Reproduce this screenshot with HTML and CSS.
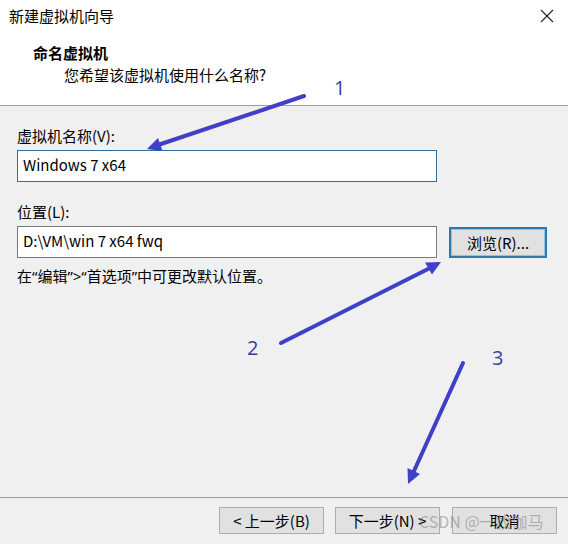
FILE: index.html
```html
<!DOCTYPE HTML>
<html>
    <head>
        <meta charset="UTF-8">
        <title>新建虚拟机向导</title>
        <link rel="stylesheet" href="styles.css">
    </head>
    <body>
        <div id="wizard">
            <div class="header">
                <div class="titlebar">
                    <span class="title">新建虚拟机向导</span>
                    <svg class="close" width="14" height="14" viewBox="0 0 14 14">
                        <path d="M1 1L13 13M13 1L1 13" stroke="#222" stroke-width="1.1" fill="none"/>
                    </svg>
                </div>
                <h1 class="heading">命名虚拟机</h1>
                <p class="sub">您希望该虚拟机使用什么名称?</p>
            </div>
            <div class="content">
                <p class="label">虚拟机名称(V):</p>
                <input class="textbox focused" type="text" value="Windows 7 x64">
                <p class="label second">位置(L):</p>
                <div class="path-row">
                    <input class="textbox" type="text" value="D:\VM\win 7 x64 fwq">
                    <button class="btn browse">浏览(R)...</button>
                </div>
                <p class="hint">在“编辑”>“首选项”中可更改默认位置。</p>
            </div>
            <div class="footer">
                <button class="btn">&lt; 上一步(B)</button>
                <button class="btn">下一步(N) &gt;</button>
                <button class="btn">取消</button>
            </div>
            <!-- 标注：箭头和序号 -->
            <svg class="marks" width="568" height="544" viewBox="0 0 568 544">
                <g stroke="#3f3fc8" stroke-width="4" stroke-linecap="round" fill="none">
                    <line x1="304" y1="96" x2="158" y2="145"/>
                    <line x1="281" y1="343" x2="430" y2="268"/>
                    <line x1="463" y1="363" x2="414" y2="471"/>
                </g>
                <g fill="#3f3fc8">
                    <polygon points="147,149 162.5,151 158,138"/>
                    <polygon points="441,262 432,274.5 425,262.5"/>
                    <polygon points="408,484 420,474 407.5,468"/>
                </g>
                <g class="num" fill="#3b3b9e">
                    <text x="334" y="95">1</text>
                    <text x="247" y="355">2</text>
                    <text x="492" y="365">3</text>
                </g>
            </svg>
            <span class="watermark">CSDN @一枚伽马</span>
        </div>
    </body>
</html>
```

FILE: styles.css
```css
body{margin:0;font-family:"Noto Sans CJK SC","Noto Sans",sans-serif;font-size:15px;color:#000;}
p,h1{margin:0;}
button{margin:0;padding:0;font-family:inherit;}
#wizard{
    position:relative;
    display:flex;
    flex-direction:column;
    width:568px;
    height:544px;
    background-color:#f0f0f0;
    overflow:hidden;
}
/* 顶部白色区域 */
#wizard .header{
    box-sizing:border-box;
    height:106px;
    background-color:#fff;
    border-bottom:1px solid #a0a0a0;
}
#wizard .titlebar{
    display:flex;
    align-items:center;
    justify-content:space-between;
    height:31px;
    padding:0 14px 0 9px;
    line-height:20px;
}
#wizard .close{
    display:block;
    margin-top:1px;
}
#wizard .heading{
    margin-top:12px;
    padding-left:33px;
    font-size:15px;
    font-weight:bold;
    line-height:20px;
}
#wizard .sub{
    margin-top:2px;
    padding-left:64px;
    line-height:20px;
}
/* 中间表单区域 */
#wizard .content{
    flex:1;
    padding:20px 0 0 17px;
}
#wizard .label{
    margin-bottom:4px;
    line-height:20px;
}
#wizard .label.second{
    margin-top:20px;
}
#wizard .textbox{
    display:block;
    box-sizing:border-box;
    width:420px;
    height:32px;
    margin:0;
    padding:0 5px 4px;
    border:1px solid #7a7a7a;
    font-family:inherit;
    font-size:15px;
    color:#000;
    background-color:#fff;
    outline:none;
}
#wizard .textbox.focused{
    border-color:#2f6f9f;
}
#wizard .path-row{
    display:flex;
    align-items:center;
    gap:12px;
}
#wizard .hint{
    margin-top:8px;
    line-height:20px;
    font-family:"Noto Sans","Noto Sans CJK SC",sans-serif; /*引号用窄字形*/
}
#wizard .btn{
    box-sizing:border-box;
    width:105px;
    height:27px;
    border:1px solid #adadad;
    font-size:15px;
    line-height:25px;
    color:#000;
    background-color:#e1e1e1;
}
#wizard .browse{
    width:98px;
    height:31px;
    border:2px solid #2a7ab0;
    box-shadow:inset 0 0 0 1px #8ec3e6;
}
/* 底部按钮 */
#wizard .footer{
    display:flex;
    justify-content:flex-end;
    gap:11px;
    height:47px;
    box-sizing:border-box;
    padding:9px 11px 0 0;
    border-top:1px solid #a0a0a0;
}
#wizard .footer .btn:nth-child(3){
    margin-left:1px;
}
#wizard .marks{
    position:absolute;
    top:0;
    left:0;
    pointer-events:none;
}
#wizard .num{
    font-family:"Open Sans","Noto Sans",sans-serif;
    font-size:20px;
}
#wizard .watermark{
    position:absolute;
    left:419px;
    top:510px;
    font-size:16px;
    line-height:22px;
    color:rgba(120,120,120,.5);
    pointer-events:none;
}
```
